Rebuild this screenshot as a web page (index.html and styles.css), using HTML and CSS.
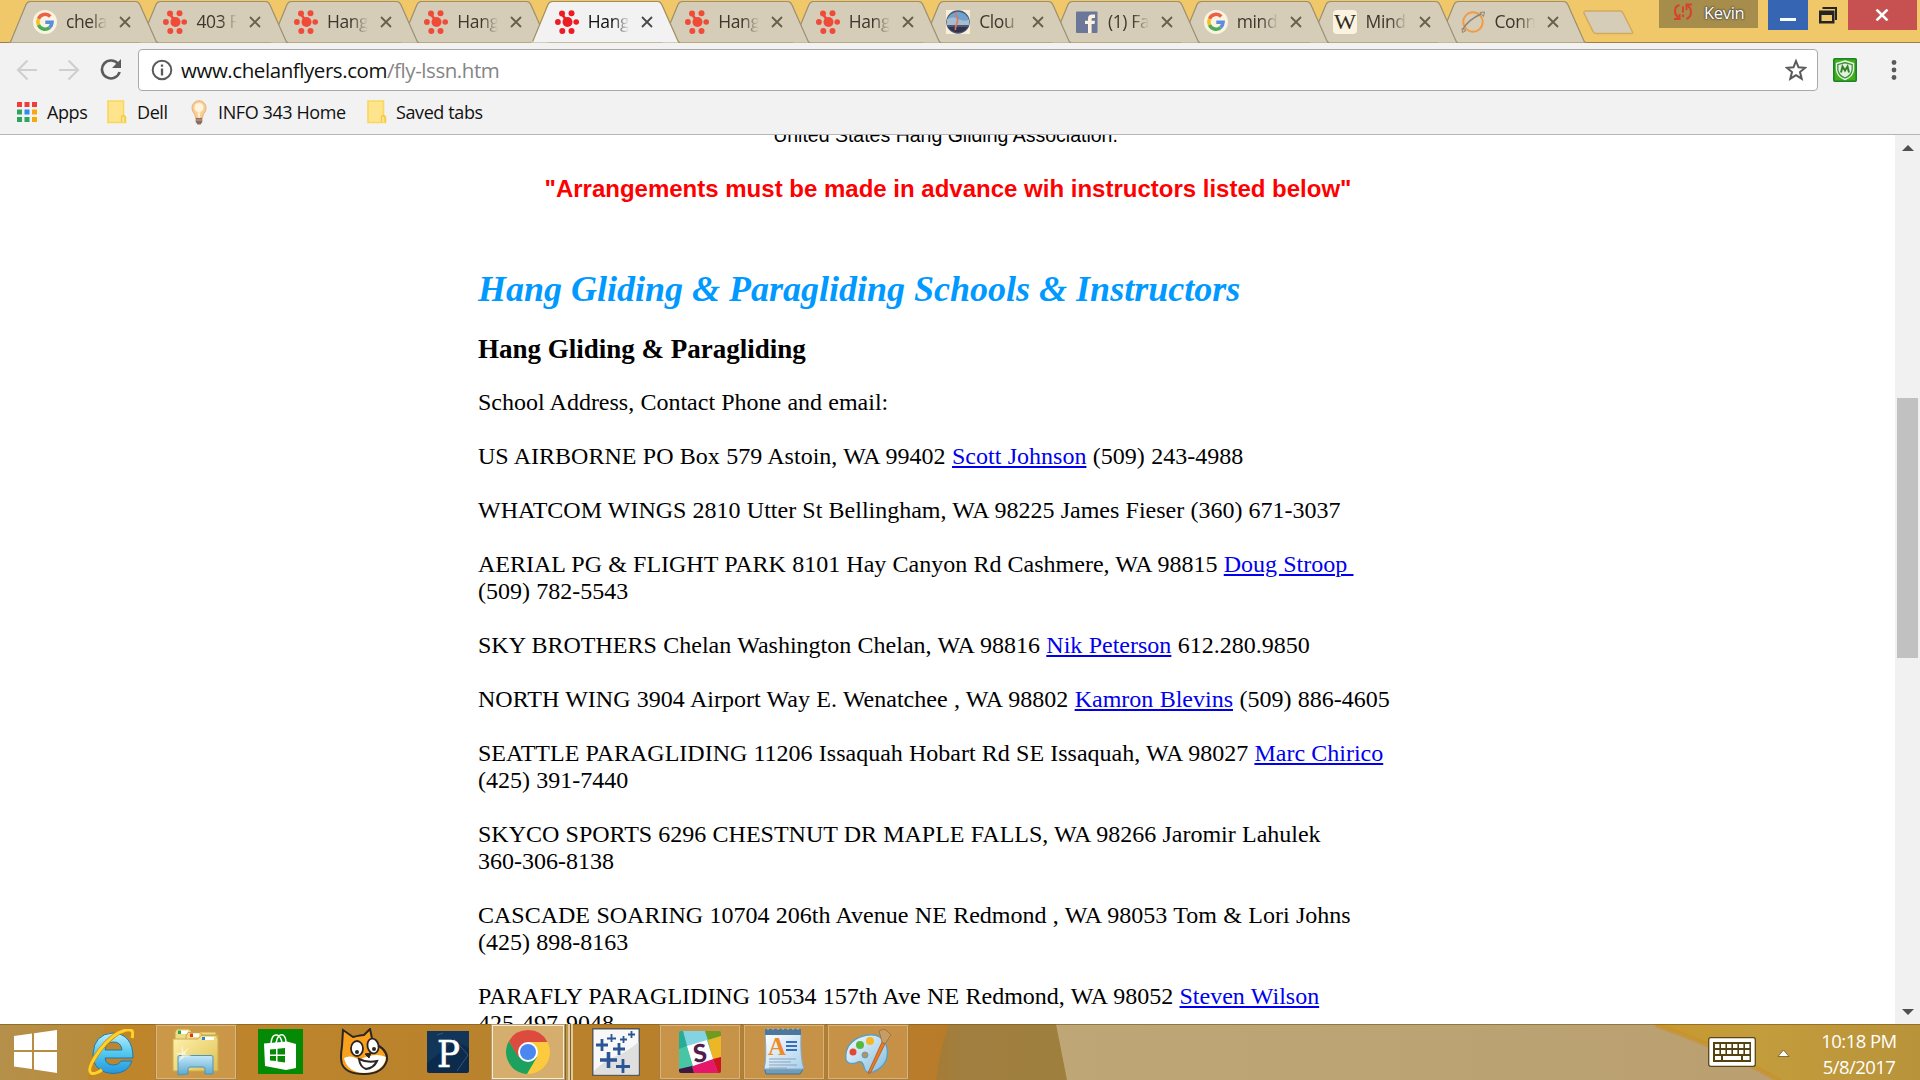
FILE: index.html
```html
<!DOCTYPE html>
<html lang="en">
<head>
<meta charset="utf-8">
<title>Chelan Flyers - Instruction</title>
<link rel="stylesheet" href="styles.css">
</head>
<body>
<svg class="defs" width="0" height="0" aria-hidden="true">
  <symbol id="tab-shape" viewBox="0 0 149 43"><path d="M0 42.500L1.500 42L17 4.500Q18.300 1.500 21.500 1.500H126.500Q129.500 1.500 130.800 4.500L147 41Q147.700 42.500 149 42.500" stroke-width="1.200"/></symbol>
  <symbol id="i-close" viewBox="0 0 12 12"><path d="M1 1L11 11M11 1L1 11" fill="none" stroke="currentColor" stroke-width="1.800"/></symbol>
  <symbol id="i-splat" viewBox="0 0 24 24"><g fill="currentColor"><circle cx="12.500" cy="12" r="5"/><circle cx="7" cy="3.500" r="3"/><circle cx="16.500" cy="3.300" r="3"/><circle cx="2.900" cy="12" r="2.900"/><circle cx="21.200" cy="12" r="2.800"/><circle cx="7.300" cy="20.900" r="3"/><circle cx="16.500" cy="20.900" r="3"/></g><path d="M7 4L11 10" stroke="currentColor" stroke-width="2.500"/></symbol>
  <symbol id="i-google" viewBox="0 0 24 24"><circle cx="12" cy="12" r="12" fill="#fbf3e2"/><g fill="none" stroke-width="3.500"><path d="M17.300 6.500A7.200 7.200 0 0 0 5.500 8.900" stroke="#ec6044"/><path d="M5.500 8.900A7.200 7.200 0 0 0 5.500 15.100" stroke="#f5bf1c"/><path d="M5.500 15.100A7.200 7.200 0 0 0 16.500 17.600" stroke="#48ad54"/><path d="M16.500 17.600A7.200 7.200 0 0 0 19.100 12.300H12.300" stroke="#5a8ee0"/></g></symbol>
  <symbol id="i-folder" viewBox="0 0 20 24"><path d="M1 1H16.500V16L18.500 17V22.500H1Z" fill="#ffe48e" stroke="#f8d75c" stroke-width="1.600"/><path d="M14.500 22V17.500A1.500 1.500 0 0 1 18 17.500V22.500" fill="#ffe48e" stroke="#f2c93d" stroke-width="1.300"/></symbol>
</svg>

<header class="chrome">
  <div class="titlebar">
    <div class="tabs">
      <div class="tab t12"><svg class="shape"><use href="#tab-shape"/></svg><svg class="fav"><use href="#i-google"/></svg><span class="label">chela</span><svg class="close"><use href="#i-close"/></svg></div>
      <div class="tab t11"><svg class="shape"><use href="#tab-shape"/></svg><svg class="fav splat"><use href="#i-splat"/></svg><span class="label">403 F</span><svg class="close"><use href="#i-close"/></svg></div>
      <div class="tab t10"><svg class="shape"><use href="#tab-shape"/></svg><svg class="fav splat"><use href="#i-splat"/></svg><span class="label">Hang</span><svg class="close"><use href="#i-close"/></svg></div>
      <div class="tab t9"><svg class="shape"><use href="#tab-shape"/></svg><svg class="fav splat"><use href="#i-splat"/></svg><span class="label">Hang</span><svg class="close"><use href="#i-close"/></svg></div>
      <div class="tab active"><svg class="shape"><use href="#tab-shape"/></svg><svg class="fav splat"><use href="#i-splat"/></svg><span class="label">Hang</span><svg class="close"><use href="#i-close"/></svg></div>
      <div class="tab t7"><svg class="shape"><use href="#tab-shape"/></svg><svg class="fav splat"><use href="#i-splat"/></svg><span class="label">Hang</span><svg class="close"><use href="#i-close"/></svg></div>
      <div class="tab t6"><svg class="shape"><use href="#tab-shape"/></svg><svg class="fav splat"><use href="#i-splat"/></svg><span class="label">Hang</span><svg class="close"><use href="#i-close"/></svg></div>
      <div class="tab t5"><svg class="shape"><use href="#tab-shape"/></svg><svg class="fav" viewBox="0 0 24 24"><rect width="24" height="24" fill="#faeed8"/><circle cx="12" cy="12" r="11.800" fill="#4a5a78"/><path d="M.5 11A11.800 11.800 0 0 1 23.500 11Z" fill="#6fa3cd"/><path d="M1 9.500Q6 6 12 9T23 10V15H1Z" fill="#a9bccd"/><path d="M2 17H22A11.800 11.800 0 0 1 2 17Z" fill="#32344c"/><path d="M9 3Q13 8 11 13T9.500 20" fill="none" stroke="#e07860" stroke-width="1.600"/></svg><span class="label">Clou</span><svg class="close"><use href="#i-close"/></svg></div>
      <div class="tab t4"><svg class="shape"><use href="#tab-shape"/></svg><svg class="fav" viewBox="0 0 24 24"><rect x="1" y="1.500" width="21.500" height="21.500" rx="1" fill="#6b7798"/><path d="M13 23V14H10V10.800H13V8.500Q13 4.500 17.200 4.500H20V8H18Q16.600 8 16.600 9.200V10.800H20L19.500 14H16.600V23Z" fill="#fbf1de"/></svg><span class="label">(1) Fa</span><svg class="close"><use href="#i-close"/></svg></div>
      <div class="tab t3"><svg class="shape"><use href="#tab-shape"/></svg><svg class="fav"><use href="#i-google"/></svg><span class="label">mind</span><svg class="close"><use href="#i-close"/></svg></div>
      <div class="tab t2"><svg class="shape"><use href="#tab-shape"/></svg><svg class="fav" viewBox="0 0 24 24"><rect width="24" height="24" rx="4" fill="#fbf2df"/><text x="12" y="19" text-anchor="middle" font-family="Liberation Serif, serif" font-size="21.500" textLength="22" lengthAdjust="spacingAndGlyphs" fill="#2e2b22">W</text></svg><span class="label">Mind</span><svg class="close"><use href="#i-close"/></svg></div>
      <div class="tab t1"><svg class="shape"><use href="#tab-shape"/></svg><svg class="fav" viewBox="0 0 24 24"><circle cx="12" cy="12" r="9.700" fill="none" stroke="#f29b45" stroke-width="2"/><path d="M2 19Q7 10 20 4" fill="none" stroke="#8c8578" stroke-width="1.500"/><path d="M19 2.500L23.500 2L22.500 6.500ZM1 18.500L1.500 22.500L5 20.500Z" fill="none" stroke="#8c8578"/></svg><span class="label">Conn</span><svg class="close"><use href="#i-close"/></svg></div>
    </div>
    <svg class="newtab" viewBox="0 0 51 25"><path d="M3.500 1H37Q39 1 40 3L49.500 22Q50 23.500 48.500 23.500H13Q11 23.500 10 21.500L1 3Q.5 1 3.500 1Z" fill="#d6cdb8" stroke="#cfab5e" stroke-width="1.500"/></svg>
    <div class="profile">
      <svg width="20" height="18" viewBox="0 0 20 18" fill="none" stroke="#d8402f" stroke-width="2"><path d="M6.500 2Q2 3 2 8Q2 12 5.500 15M13.500 16Q18 14 18 9Q18 5 14.500 2.500"/><path d="M1 16H6.500V11M19 1.500H13.500V7M10 3.500V9.500M10 11.500V14"/></svg>
      <span>Kevin</span>
    </div>
    <div class="wbtn min"><svg width="16" height="3"><rect width="16" height="3" fill="#fff"/></svg></div>
    <div class="wbtn max"><svg width="18" height="17" viewBox="0 0 18 17"><path d="M3.500 1H17V13" fill="none" stroke="#242424" stroke-width="2"/><path d="M0 3.500H15.500V16.500H0ZM2.500 8V14H13V8Z" fill="#242424" fill-rule="evenodd"/></svg></div>
    <div class="wbtn shut"><svg width="14" height="12" viewBox="0 0 14 12"><path d="M1.500 .5L12.500 11.500M12.500 .5L1.500 11.500" stroke="#fff" stroke-width="2.500"/></svg></div>
  </div>

  <div class="toolbar">
    <svg class="nav back" viewBox="0 0 22 22"><path d="M21 11H3M11.500 1.500L2 11L11.500 20.500"/></svg>
    <svg class="nav fwd" viewBox="0 0 22 22"><path d="M1 11H19M10.500 1.500L20 11L10.500 20.500"/></svg>
    <svg class="nav reload" viewBox="0 0 22 22"><path d="M18.500 5.500A9 9 0 1 0 19.600 13" fill="none" stroke="#5a5a5a" stroke-width="2.600"/><path d="M21 0V9H12Z" fill="#5a5a5a"/></svg>
    <div class="omnibox">
      <svg width="22" height="22" viewBox="0 0 22 22"><circle cx="11" cy="11" r="9.300" fill="none" stroke="#5a5a5a" stroke-width="2"/><path d="M11 5.500V7.700M11 9.500V16.500" stroke="#5a5a5a" stroke-width="2.300"/></svg>
      <span class="url">www.chelanflyers.com<i>/fly-lssn.htm</i></span>
      <svg class="star" viewBox="0 0 22 22"><path d="M11 2L13.500 8.300L20.200 8.800L15 13.100L16.700 19.700L11 16.100L5.300 19.700L7 13.100L1.800 8.800L8.500 8.300Z" fill="none" stroke="#5a5a5a" stroke-width="2"/></svg>
    </div>
    <svg class="mcafee" viewBox="0 0 24 24"><rect x=".8" y=".8" width="22.400" height="22.400" rx="1" fill="#42ad1d" stroke="#1b8424" stroke-width="1.600"/><path d="M12 3L20.500 5.500V12Q19.500 19 12 21.500Q4.500 19 3.500 12V5.500Z" fill="#3b963a" stroke="#eaf5e5" stroke-width="1.400"/><path d="M12 5.500L18.500 7V12Q17.500 17.300 12 19.300Q6.500 17.300 5.500 12V7Z" fill="#e5f1df"/><path d="M8 14.500L9.500 8.500L12 12.500L14.500 8.500L16 14.500" fill="none" stroke="#318227" stroke-width="2"/></svg>
    <svg class="dots" viewBox="0 0 6 20"><g fill="#5a5a5a"><circle cx="3" cy="2.500" r="2.400"/><circle cx="3" cy="10" r="2.400"/><circle cx="3" cy="17.500" r="2.400"/></g></svg>
  </div>

  <nav class="bookmarks">
    <svg class="apps" viewBox="0 0 20 20"><path d="M0 0H5V5H0ZM7.500 0H12.500V5H7.500ZM15 0H20V5H15Z" fill="#f23c3c"/><path d="M0 7.500H5V12.500H0ZM0 15H5V20H0Z" fill="#2ea55c"/><path d="M7.500 7.500H12.500V12.500H7.500Z" fill="#2c8cf0"/><path d="M15 7.500H20V12.500H15ZM15 15H20V20H15Z" fill="#fba70b"/><path d="M7.500 15H12.500V20H7.500Z" fill="#2ea55c"/></svg>
    <span class="b-apps">Apps</span>
    <svg class="folder"><use href="#i-folder"/></svg>
    <span class="b-dell">Dell</span>
    <svg class="bulb" viewBox="0 0 16 25"><path d="M8 .7A7 7 0 0 1 15 8Q15 11.500 12.500 14L11.300 18H4.700L3.500 14Q1 11.500 1 8A7 7 0 0 1 8 .7Z" fill="#f8cd96" stroke="#e8b377"/><circle cx="8" cy="7.500" r="4.500" fill="#fff5de"/><path d="M6.500 8L8 18L9.500 8" fill="none" stroke="#fff3d5"/><path d="M4.700 18H11.300V22L9.500 24.500H6.500L4.700 22Z" fill="#8f6d5a"/><path d="M4.700 20H11.300" stroke="#c3a79a"/></svg>
    <span class="b-info">INFO 343 Home</span>
    <svg class="folder"><use href="#i-folder"/></svg>
    <span class="b-saved">Saved tabs</span>
  </nav>
</header>

<div class="view">
  <main class="page">
    <p class="assoc">United States Hang Gliding Association.</p>
    <p class="notice">"Arrangements must be made in advance wih instructors listed below"</p>
    <h1>Hang Gliding &amp; Paragliding Schools &amp; Instructors</h1>
    <h3>Hang Gliding &amp; Paragliding</h3>
    <p>School Address, Contact Phone and email:</p>
    <p class="loose">US AIRBORNE PO Box 579 Astoin, WA 99402 <a href="#">Scott Johnson</a> (509) 243-4988</p>
    <p>WHATCOM WINGS 2810 Utter St Bellingham, WA 98225 James Fieser (360) 671-3037</p>
    <p>AERIAL PG &amp; FLIGHT PARK 8101 Hay Canyon Rd Cashmere, WA 98815 <a href="#">Doug Stroop&nbsp;</a><br>(509) 782-5543</p>
    <p class="loose">SKY BROTHERS Chelan Washington Chelan, WA 98816 <a href="#">Nik Peterson</a> 612.280.9850</p>
    <p class="loose">NORTH WING 3904 Airport Way E. Wenatchee , WA 98802 <a href="#">Kamron Blevins</a> (509) 886-4605</p>
    <p>SEATTLE PARAGLIDING 11206 Issaquah Hobart Rd SE Issaquah, WA 98027 <a href="#">Marc Chirico</a><br>(425) 391-7440</p>
    <p>SKYCO SPORTS 6296 CHESTNUT DR MAPLE FALLS, WA 98266 Jaromir Lahulek<br>360-306-8138</p>
    <p class="loose">CASCADE SOARING 10704 206th Avenue NE Redmond , WA 98053 Tom &amp; Lori Johns<br>(425) 898-8163</p>
    <p class="loose">PARAFLY PARAGLIDING 10534 157th Ave NE Redmond, WA 98052 <a href="#">Steven Wilson</a><br>425-497-9048</p>
  </main>
  <div class="scrollbar">
    <svg width="12" height="6"><path d="M0 6L6 0L12 6Z" fill="#505050"/></svg>
    <div class="thumb"></div>
    <svg class="down" width="12" height="6"><path d="M0 0L6 6L12 0Z" fill="#505050"/></svg>
  </div>
</div>

<footer class="taskbar">
  <svg class="wall" viewBox="0 0 1920 56" preserveAspectRatio="none">
    <defs>
      <linearGradient id="w1"><stop offset="0" stop-color="#b5904a"/><stop offset="1" stop-color="#b98b38"/></linearGradient>
      <linearGradient id="w2"><stop offset="0" stop-color="#c1862b"/><stop offset=".45" stop-color="#b9822c"/><stop offset=".85" stop-color="#b87c2a"/><stop offset="1" stop-color="#b36f2a"/></linearGradient>
      <linearGradient id="w3"><stop offset="0" stop-color="#a67b35"/><stop offset=".2" stop-color="#a07f40"/><stop offset="1" stop-color="#9f7f3d"/></linearGradient>
      <linearGradient id="w4"><stop offset="0" stop-color="#bea676"/><stop offset="1" stop-color="#baa070"/></linearGradient>
      <linearGradient id="w5"><stop offset="0" stop-color="#c8982f"/><stop offset=".4" stop-color="#c39c3c"/><stop offset="1" stop-color="#b9933a"/></linearGradient>
    </defs>
    <rect width="1100" height="56" fill="url(#w2)"/>
    <path d="M0 0H105Q98 28 87 56H0Z" fill="url(#w1)"/>
    <path d="M949 0H1070V56H936Q940 25 949 0Z" fill="url(#w3)"/>
    <path d="M1056 0H1780V56H1067Z" fill="url(#w4)"/>
    <path d="M1652 0Q1715 20 1778 56H1920V0Z" fill="url(#w5)"/>
    <path d="M1656 1Q1715 21 1780 57" stroke="#c88f25" stroke-width="5" fill="none" opacity=".6"/>
    <rect width="1920" height="1" fill="#795817" opacity=".6"/>
  </svg>
  <div class="items">
    <div class="slot"><svg class="win" viewBox="0 0 43 43"><path d="M0 6L18 3.500V20H0ZM20 3.200L43 0V20H20ZM0 22H18V39L0 36.500ZM20 22H43V43L20 39.500Z" fill="#fff"/></svg></div>
    <div class="slot"><svg class="ie" viewBox="0 0 46 46"><defs><linearGradient id="ieg" x2="0" y2="1"><stop stop-color="#b6f0fc"/><stop offset=".5" stop-color="#54c7ee"/><stop offset="1" stop-color="#2397dc"/></linearGradient></defs><path d="M45 29H17Q18 36 25.500 36Q31 36 33 32H44Q40 44 26 44.500Q5 44 5 25Q6 5 25 4Q45 5 45 29ZM34 21Q33 13 25.500 13Q18 13 17 21Z" fill="url(#ieg)" stroke="#1b78b5" stroke-width="1"/><path d="M44 9Q47-1 38 1Q25 4 12 21Q-2 40 3 44Q6 46 14 41" fill="none" stroke="#d18a0c" stroke-width="4.500"/><path d="M44 9Q47-1 38 1Q25 4 12 21Q-2 40 3 44Q6 46 14 41" fill="none" stroke="#ffd12b" stroke-width="3"/></svg></div>
    <div class="slot run explorer"><svg width="48" height="48" viewBox="0 0 48 48"><defs><linearGradient id="fo" x2="1" y2="1"><stop stop-color="#fff3b0"/><stop offset="1" stop-color="#dfc052"/></linearGradient><linearGradient id="st" x2="0" y2="1"><stop stop-color="#c4e9f8"/><stop offset="1" stop-color="#5aa8d2"/></linearGradient></defs><path d="M3 4L5 1H17L20 4H44V20H3Z" fill="#eed984" stroke="#c4a347"/><path d="M6 2.500H16V6H6Z" fill="#fff"/><path d="M6 2.500H9V6H6Z" fill="#27a443"/><path d="M14 8L16 4.500H28L30 7H46V22H14Z" fill="#f0db88" stroke="#c4a347"/><path d="M18 5.500H27V9H18Z" fill="#fff"/><path d="M18 5.500H21V9H18Z" fill="#e7331d"/><path d="M1 11H26L29 7.500H44L46 11V43H1Z" fill="url(#fo)" stroke="#cbaa4b"/><path d="M30 9H42V12H30Z" fill="#fff"/><path d="M30 9H33V12H30Z" fill="#2786d8"/><path d="M6 47V29Q6 27.500 8 27.500H39Q41 27.500 41 29V46H33V41Q33 39 31 39H18Q16 39 16 41V46Z" fill="url(#st)" stroke="#4d95bd"/><path d="M10 16L11.500 24L17 19L13 26L20 28L13 28.500L6 34L10 27.500L3 25L9.500 25Z" fill="#fffbe1" opacity=".7"/></svg></div>
    <div class="slot"><svg width="45" height="45" viewBox="0 0 45 45"><rect width="45" height="45" fill="#058a05"/><path d="M6 14.500L29 12.500L38 15V39L28 41L7 37Z" fill="#fff"/><path d="M13 14Q14 5 19 6Q23 7 24 14M18 14Q20 4 25 6Q28 8 28 14" fill="none" stroke="#fff" stroke-width="1.500"/><path d="M12 20.500L18 20V25.500H12ZM19.500 19.800L27 19V25.500H19.500ZM12 27H18V32L12 31.500ZM19.500 27H27V33.500L19.500 32.500Z" fill="#058a05"/></svg></div>
    <div class="slot"><svg width="50" height="48" viewBox="0 0 50 48"><path d="M3 18L4 2L14 9Q22 7 25 7L31 1L34 15Q49 21 48 32Q44 46 25 46Q7 46 3 36Q1 30 3 18Z" fill="#f9a11c" stroke="#2b2523" stroke-width="2"/><path d="M5 30Q12 26 20 32Q36 24 47 29Q45 44 25 45Q8 44 5 30Z" fill="#fff"/><ellipse cx="18" cy="20.500" rx="6" ry="7.500" fill="#fff" stroke="#2b2523" stroke-width="1.800"/><ellipse cx="34" cy="18" rx="5.500" ry="7.500" fill="#fff" stroke="#2b2523" stroke-width="1.800" transform="rotate(-12 34 18)"/><circle cx="18" cy="24" r="2" fill="#2b2523"/><circle cx="35" cy="21" r="2" fill="#2b2523"/><path d="M26 26L32 25L30 30Z" fill="#2b2523" stroke="#2b2523"/><path d="M20 31Q28 35 38 33Q35 40 27 41Q21 39 20 31Z" fill="#fff" stroke="#2b2523" stroke-width="2"/></svg></div>
    <div class="slot"><svg width="42" height="42" viewBox="0 0 42 42"><rect width="42" height="42" rx="2" fill="#0c2a4b"/><path d="M0 0H42V17L28 10L0 32Z" fill="#113659"/><path d="M27 8L41 24L30 40M10 4L16 2" stroke="#40607d" fill="none" stroke-width=".8"/><text x="21.500" y="35.500" text-anchor="middle" font-family="DejaVu Serif, serif" font-size="37" textLength="23" lengthAdjust="spacingAndGlyphs" fill="#fff" stroke="#fff" stroke-width=".6">P</text></svg></div>
    <div class="slot run chromebtn"><svg width="46" height="46" viewBox="0 0 46 46"><circle cx="23" cy="23" r="22" fill="#fbca3d"/><path d="M3.950 12A22 22 0 0 0 22 45L32 28L23 23L14 28Z" fill="#1da15f"/><path d="M3.950 12A22 22 0 0 1 42.500 13H23L13.500 28.500Z" fill="#dc4b3e"/><circle cx="23" cy="23" r="10" fill="#fff"/><circle cx="23" cy="23" r="8" fill="#4a87f0"/></svg></div>
    <div class="stack"></div>
    <div class="slot tableau"><svg width="48" height="48" viewBox="0 0 48 48"><rect x=".8" y=".8" width="46.400" height="46.400" fill="#f8f8f8" stroke="#4c4d50" stroke-width="1.300"/><path d="M46.500 14Q35 24 24 28T2 43V46.500H46.500Z" fill="#dfdfdf"/><g stroke="#2b5594" fill="none"><path d="M10 11V23M4 17H16" stroke-width="2.800"/><path d="M27 15V27M21 21H33" stroke-width="2.800"/><path d="M16.500 24V40M8 32H25" stroke-width="3.600"/><path d="M31 31V45M24 38.500H38" stroke-width="2.800"/><path d="M19.500 6V14M15 10.500H24M39.500 3V10M36 6.500H43M31.500 8V15M28 11.500H35" stroke-width="1.800"/></g></svg></div>
    <div class="slot run slack"><svg width="42" height="42" viewBox="0 0 42 42"><defs><clipPath id="sc"><rect width="42" height="42" rx="2"/></clipPath></defs><g clip-path="url(#sc)"><rect width="42" height="42" fill="#48c5a4"/><path d="M4 0H26L29 9L8 16Z" fill="#83d3e3"/><path d="M26 0H42V5L29 9Z" fill="#709b1e"/><path d="M29 9L42 5V26L34 29Z" fill="#ecb625"/><path d="M13 35L34 28L39 42H15Z" fill="#e6176b"/><path d="M34 28L42 26V42H39Z" fill="#d01222"/><path d="M0 38L13 35L15 42H0Z" fill="#3e1840"/><path d="M8 15L28 9L34 28L14 35Z" fill="#fff"/><path d="M4 0L8 15L0 18V0Z" fill="#26ad95"/></g><text x="21" y="31" text-anchor="middle" font-family="Lato, sans-serif" font-weight="900" font-size="25" fill="#501f4d" transform="rotate(-6 21 22)">S</text></svg></div>
    <div class="slot run"><svg width="42" height="48" viewBox="0 0 42 48"><defs><linearGradient id="wp" x2="1" y2="1"><stop stop-color="#fff"/><stop offset="1" stop-color="#a8d0ee"/></linearGradient></defs><path d="M1 39L3 46H37L41 40Z" fill="#709dbb" stroke="#466f8f"/><path d="M2 5H38Q37 31 41 41H1Q4 31 2 5Z" fill="url(#wp)" stroke="#87a9c5"/><path d="M2 1H38V7H2Z" fill="#4d789b"/><path d="M4 1H6M9 1H11M14 1H16M19 1H21M24 1H26M29 1H31M34 1H36" stroke="#aec5d4"/><text x="14" y="27" text-anchor="middle" font-family="Liberation Serif, serif" font-weight="bold" font-size="25" fill="#ef8a27">A</text><path d="M23 14H34M23 18H34M23 22H34" stroke="#386fba" stroke-width="1.800"/><path d="M6 31H33M6 34H28M6 37H34M6 40H24" stroke="#8ba1b8" stroke-width="1.200"/></svg></div>
    <div class="slot run"><svg width="48" height="46" viewBox="0 0 48 46"><defs><linearGradient id="pa" x2="1" y2="1"><stop stop-color="#f7fcff"/><stop offset="1" stop-color="#81bde0"/></linearGradient></defs><path d="M2 31Q0 15 16 8Q35 1 42 15Q48 35 29 43Q21 45 20 38Q18 30 12 34Q4 36 2 31Z" fill="url(#pa)" stroke="#5f9dbf" stroke-width="1.400"/><circle cx="21" cy="26" r="3" fill="#bd9154" stroke="#5f9dbf"/><circle cx="9" cy="23" r="3.500" fill="#e44636"/><circle cx="16" cy="16" r="4" fill="#57b93c"/><circle cx="26" cy="12" r="4" fill="#f5b824"/><path d="M38 13L41 15L27 43Q25 46 24 44Z" fill="#e77c22" stroke="#b65214" stroke-width=".8"/><path d="M38 13L35 2Q39-1 42 1L47 6Q44 10 41 15Z" fill="#c99c66" stroke="#966b3d" stroke-width=".8"/></svg></div>
  </div>
  <div class="tray">
    <svg class="kbd" viewBox="0 0 48 30"><rect x=".7" y=".7" width="46.600" height="28.600" rx="2" fill="#fff" stroke="#5a4715" stroke-width="1.300"/><rect x="5" y="5" width="38" height="20" fill="#54430f"/><path d="M7 9H42M7 15H42" stroke="#fff" stroke-width="4" stroke-dasharray="4.400 1.600"/><path d="M7 21H13M15 21H33M35 21H41.500" stroke="#fff" stroke-width="4"/></svg>
    <svg class="up" viewBox="0 0 13 9"><path d="M1 7.500L6.500 1L12 7.500Z" fill="#fff" stroke="#6b5521" stroke-width=".8"/></svg>
    <div class="clock"><div>10:18 PM</div><div>5/8/2017</div></div>
  </div>
</footer>
</body>
</html>
```
FILE: styles.css
```css
* { box-sizing: border-box; }
body {
  margin: 0;
  width: 1920px;
  height: 1080px;
  overflow: hidden;
  display: flex;
  flex-direction: column;
  background: #fff;
  font-family: "Open Sans", "Noto Sans", sans-serif;
}
svg { display: block; flex: none; }
.defs { position: absolute; }

.chrome { height: 135px; flex: none; background: #f2f2f2; border-bottom: 1px solid #b6b4b6; }

.titlebar {
  display: flex;
  height: 43px;
  padding-left: 9px;
  background: linear-gradient(#f0c869 42px, #9b8046 42px);
}
.tabs { display: flex; width: 1577px; }
.tab {
  position: relative;
  display: flex;
  flex: none;
  width: 149px;
  height: 43px;
  margin-right: -18.550px;
  padding: 10px 0 0 24px;
  color: #3c382e;
}
.tab:nth-child(n+8) { margin-right: -20.200px; }
.shape { position: absolute; left: 0; top: 0; width: 149px; height: 43px; fill: #d6cdb8; stroke: #9c8f72; }
.active .shape { fill: #f2f2f2; stroke: #a08c5c; stroke-dasharray: 0 2 400; }
.active { z-index: 20; color: #111; }
.t12 { z-index: 12; } .t11 { z-index: 11; } .t10 { z-index: 10; } .t9 { z-index: 9; }
.t7 { z-index: 7; } .t6 { z-index: 6; } .t5 { z-index: 5; } .t4 { z-index: 4; }
.t3 { z-index: 3; } .t2 { z-index: 2; } .t1 { z-index: 1; }
.fav { position: relative; width: 24px; height: 24px; }
.splat { color: #ef4b38; }
.active .splat { color: #ed1c24; }
.label {
  position: relative;
  width: 41px;
  height: 26px;
  margin-top: -1px;
  margin-left: 9px;
  overflow: hidden;
  white-space: nowrap;
  font-size: 17.500px;
  letter-spacing: -0.400px;
  line-height: 25px;
  -webkit-mask-image: linear-gradient(90deg, #000 60%, transparent);
  mask-image: linear-gradient(90deg, #000 60%, transparent);
}
.close { position: relative; width: 12px; height: 12px; margin: 6px 0 0 12px; color: #665f4e; }
.active .close { color: #4a4a4a; }
.newtab { width: 51px; height: 25px; margin: 10px 25px 0 -3px; }
.profile {
  display: flex;
  width: 99px;
  height: 28px;
  padding: 3px 0 0 14px;
  gap: 11px;
  background: #a68d4b;
  color: #fff;
  font-size: 16.500px;
  font-weight: 500;
  letter-spacing: -0.300px;
  line-height: 20px;
  text-shadow: 0 0 2px #333, 0 0 2px #333;
}
.wbtn { display: flex; height: 30px; align-items: center; justify-content: center; }
.min { width: 40px; margin-left: 10px; padding-top: 9px; background: #3665b3; }
.max { width: 40px; }
.shut { width: 69px; padding-right: 1px; background: #c75050; }

.toolbar { display: flex; align-items: center; height: 48px; padding: 6px 0 0 16px; }
.nav { width: 22px; height: 22px; }
.back, .fwd { fill: none; stroke: #cfcfcf; stroke-width: 2.200; }
.fwd { margin-left: 20px; }
.reload { margin-left: 20px; }
.omnibox {
  display: flex;
  align-items: center;
  width: 1680px;
  height: 42px;
  margin-left: 16px;
  padding: 0 10px 0 12px;
  background: #fff;
  border: 1px solid #a9a9a9;
  border-radius: 4px;
}
.url { flex: 1; margin-left: 8px; font-size: 20.500px; letter-spacing: -0.430px; line-height: 28px; color: #111; }
.url i { font-style: normal; color: #858585; }
.star { width: 22px; height: 22px; }
.mcafee { width: 24px; height: 24px; margin-left: 15px; }
.dots { width: 6px; height: 20px; margin-left: 34px; }

.bookmarks { display: flex; align-items: center; height: 43px; padding: 0 0 1px 17px; font-size: 18px; letter-spacing: -0.400px; color: #111; }
.apps { width: 20px; height: 20px; }
.b-apps { width: 60px; margin-left: 10px; }
.folder { width: 20px; height: 24px; }
.b-dell { width: 54px; margin-left: 10px; }
.bulb { width: 16px; height: 25px; }
.b-info { width: 149px; margin-left: 11px; white-space: nowrap; }
.b-saved { margin-left: 9px; }

.view { display: flex; height: 889px; flex: none; overflow: hidden; background: #fff; }
.page {
  flex: 1;
  padding-left: 478px;
  font-family: "Liberation Serif", "Times New Roman", serif;
  font-size: 24px;
  line-height: 27px;
  color: #000;
}
.page p { margin: 0 0 27px; white-space: nowrap; word-spacing: 0.200px; }
.page .loose { word-spacing: 0.380px; }
.page a { color: #0000ee; text-decoration: underline; }
.page .assoc, .page .notice { width: 940px; text-align: center; word-spacing: 0; font-family: "Liberation Sans", Arial, sans-serif; }
.page .assoc { width: 935px; margin: -12px 0 28px; font-size: 19.500px; line-height: 24px; }
.page .notice { margin-bottom: 67px; font-weight: bold; color: #ff0000; }
.page h1 { margin: 0 0 25px; font-size: 36px; line-height: 40px; font-style: italic; color: #0099ff; }
.page h3 { margin: 0 0 24px; font-size: 27px; line-height: 31px; }

.scrollbar { display: flex; flex-direction: column; align-items: center; width: 25px; padding-top: 10px; background: #f1f1f1; }
.thumb { width: 21px; height: 260px; margin-top: 247px; background: #c1c1c1; }
.down { margin: auto 0 9px; }

.taskbar { position: relative; display: flex; justify-content: space-between; height: 56px; flex: none; }
.wall { position: absolute; left: 0; top: 0; width: 1920px; height: 56px; }
.items { position: relative; display: flex; }
.slot { display: flex; align-items: center; justify-content: center; width: 82px; margin-right: 2px; padding-bottom: 1px; }
.win { width: 43px; height: 43px; margin-right: 14px; margin-bottom: 1px; }
.ie { width: 46px; height: 46px; margin-right: 26px; margin-left: 9px; }
.slot:first-child { width: 84px; margin-right: 0; }
.slot:nth-child(2) { width: 71px; margin-right: 0; }
.run { border: 2px solid rgba(255, 230, 190, .5); box-shadow: inset 0 0 0 60px rgba(255, 230, 190, .2); outline: 1px solid rgba(110, 75, 20, .5); outline-offset: -1px; }
.chromebtn { width: 74px; margin-right: 0; border-color: #f8ecd2; box-shadow: inset 0 0 0 60px rgba(255, 240, 210, .4); }
.stack { width: 8px; margin-right: 2px; border-right: 2px solid #e0cb9e; background: linear-gradient(90deg, #87631f 1px, #bc9550 1px 3px, #e0cb9e 3px 5px, #87631f 5px); }
.tray { position: relative; display: flex; width: 212px; }
.kbd { width: 48px; height: 30px; margin-top: 13px; }
.up { width: 13px; height: 9px; margin: 25px 0 0 21px; }
.clock { flex: 1; margin-left: 16px; padding-top: 4px; padding-right: 8px; color: #fff; text-align: center; font-size: 18.500px; letter-spacing: -0.550px; line-height: 26px; }
```
